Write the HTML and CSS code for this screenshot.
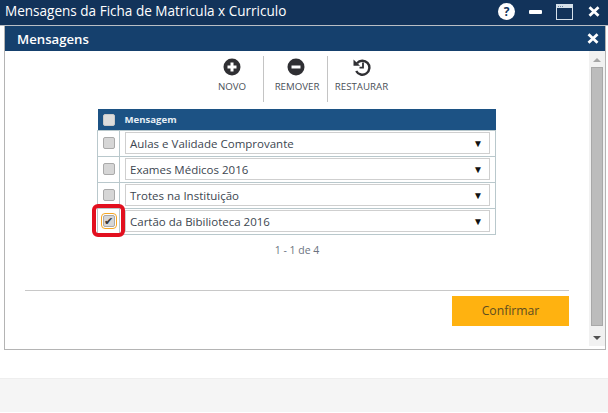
FILE: index.html
```html
<!DOCTYPE html>
<html lang="pt">

<head>
    <meta charset="UTF-8">
    <title>Mensagens da Ficha de Matricula x Curriculo</title>
    <link rel="stylesheet" href="styles.css">
</head>

<body>

    <div class="topbar">
        <span class="topbar-title">Mensagens da Ficha de Matricula x Curriculo</span>
        <div class="topbar-icons">
            <span class="help-icon">?</span>
            <span class="min-icon"></span>
            <svg class="win-icon" width="17" height="16" viewBox="0 0 17 16">
                <rect x="0.5" y="0.5" width="16" height="15" fill="#12335a" stroke="#d5e0ea"/>
                <rect x="1" y="1" width="15" height="3" fill="#d5e0ea"/>
                <path d="M2 2.5h1M4 2.5h1M6 2.5h1" stroke="#6d86a0"/>
            </svg>
            <svg class="close-icon" width="12" height="11" viewBox="0 0 12 11">
                <path d="M1.5 1.2l9 8.6M10.5 1.2l-9 8.6" stroke="#fff" stroke-width="2.8"/>
            </svg>
        </div>
    </div>

    <div class="dialog">
        <div class="dialog-head">
            <span>Mensagens</span>
            <svg width="12" height="11" viewBox="0 0 12 11">
                <path d="M1.5 1.2l9 8.6M10.5 1.2l-9 8.6" stroke="#fff" stroke-width="2.8"/>
            </svg>
        </div>

        <div class="dialog-body">
            <div class="content">
                <div class="toolbar">
                    <div class="tool tool-novo">
                        <svg width="18" height="18" viewBox="0 0 18 18">
                            <circle cx="9" cy="9" r="8.5" fill="#2f2f33"/>
                            <path d="M9 4.5v9M4.5 9h9" stroke="#fff" stroke-width="3"/>
                        </svg>
                        <span>NOVO</span>
                    </div>
                    <div class="tool tool-remover">
                        <svg width="18" height="18" viewBox="0 0 18 18">
                            <circle cx="9" cy="9" r="8.5" fill="#2f2f33"/>
                            <path d="M4.5 9h9" stroke="#fff" stroke-width="3"/>
                        </svg>
                        <span>REMOVER</span>
                    </div>
                    <div class="tool tool-restaurar">
                        <svg width="18" height="18" viewBox="0 0 18 18">
                            <path d="M4 5.2A7 7 0 1 1 3.2 13" fill="none" stroke="#2f2f33" stroke-width="2.4"/>
                            <path d="M0.5 1.5l6.5 6.2H0.5z" fill="#2f2f33"/>
                            <path d="M10 4.5v5.2H6.5" fill="none" stroke="#2f2f33" stroke-width="1.8"/>
                        </svg>
                        <span>RESTAURAR</span>
                    </div>
                </div>

                <div class="table-wrap">
                    <table class="grid">
                        <thead>
                            <tr>
                                <th class="col-check"><span class="check"></span></th>
                                <th>Mensagem</th>
                            </tr>
                        </thead>
                        <tbody>
                            <tr>
                                <td class="col-check"><span class="check"></span></td>
                                <td><div class="select"><span>Aulas e Validade Comprovante</span><i>▼</i></div></td>
                            </tr>
                            <tr>
                                <td class="col-check"><span class="check"></span></td>
                                <td><div class="select"><span>Exames Médicos 2016</span><i>▼</i></div></td>
                            </tr>
                            <tr>
                                <td class="col-check"><span class="check"></span></td>
                                <td><div class="select"><span>Trotes na Instituição</span><i>▼</i></div></td>
                            </tr>
                            <tr>
                                <td class="col-check">
                                    <span class="check checked">✔</span>
                                    <span class="highlight"></span>
                                </td>
                                <td><div class="select"><span>Cartão da Bibilioteca 2016</span><i>▼</i></div></td>
                            </tr>
                        </tbody>
                    </table>
                </div>

                <div class="pager">1 - 1 de 4</div>

                <div class="actions">
                    <button class="btn">Confirmar</button>
                </div>
            </div>

            <div class="scrollbar">
                <span class="arrow-up"></span>
                <span class="thumb"></span>
                <span class="arrow-down"></span>
            </div>
        </div>
    </div>

    <div class="footer"></div>

</body>

</html>
```

FILE: styles.css
```css
:root {
    --navy: #12335a;
    --blue: #15406d;
    --head: #1c5284;
    --line: #b9c8cc;
    --border: #b4b4b4;
}

* {
    box-sizing: border-box;
}

html,
body {
    height: 100%;
}

body {
    margin: 0;
    width: 608px;
    height: 413px;
    overflow: hidden;
    background-color: #fff;
    font-family: "Open Sans", "Noto Sans", sans-serif;
    color: #3c4650;
}

.topbar {
    height: 26px;
    background-color: var(--navy);
    border-bottom: 1px solid #b9bec4;
    display: flex;
    align-items: center;
    justify-content: space-between;
    color: #fff;
    padding: 0 8px 2px 5px;
}

.topbar-title {
    font-size: 13.55px;
    line-height: 20px;
    margin-top: -1px;
}

.topbar-icons {
    display: flex;
    align-items: center;
}

.help-icon {
    width: 17px;
    height: 17px;
    border-radius: 50%;
    background-color: #fff;
    color: #12335a;
    font-size: 12px;
    font-weight: 700;
    line-height: 17px;
    text-align: center;
}

.min-icon {
    width: 13px;
    height: 4px;
    border-radius: 1px;
    background-color: #fff;
    margin-left: 14px;
}

.win-icon {
    margin-left: 14px;
}

.close-icon {
    margin-left: 15px;
}

.dialog {
    width: 602px;
    height: 324px;
    margin-left: 4px;
    border: 1px solid var(--border);
    border-top: 0;
    display: flex;
    flex-direction: column;
}

.dialog-head {
    height: 25px;
    background-color: var(--blue);
    color: #fff;
    font-size: 13.2px;
    font-weight: 600;
    display: flex;
    align-items: center;
    justify-content: space-between;
    padding: 0 6px 0 12px;
    flex: none;
}

.dialog-body {
    flex: 1;
    display: flex;
    min-height: 0;
}

.content {
    width: 584px;
    flex: none;
}

.toolbar {
    display: flex;
    height: 46px;
    margin-top: 5px;
    padding-left: 200px;
}

.tool {
    display: flex;
    flex-direction: column;
    align-items: center;
    font-size: 9.7px;
    line-height: 14px;
    color: #4a5058;
    padding-top: 2px;
    gap: 4px;
}

.tool-novo {
    width: 58px;
    padding-right: 4px;
}

.tool-remover {
    width: 65px;
    padding-left: 3px;
    border-left: 1px solid #c4c4c4;
    border-right: 1px solid #c4c4c4;
}

.tool-remover svg {
    margin-right: 2px;
}

.tool-restaurar {
    width: 67px;
}

.table-wrap {
    margin: 7px 0 0 92px;
}

.grid {
    width: 399px;
    border-collapse: collapse;
    table-layout: fixed;
}

.grid th {
    height: 21px;
    padding: 1px 0 0 5px;
    background-color: var(--head);
    color: #e6eef5;
    font-size: 9.6px;
    font-weight: 700;
    text-align: left;
}

.grid td {
    height: 26px;
    padding: 0 5px 0 5px;
    border: 1px solid var(--line);
}

.grid .col-check {
    width: 22px;
    padding: 0;
    text-align: center;
    position: relative;
}

.check {
    display: block;
    width: 12px;
    height: 12px;
    margin: 0 auto;
    background-color: #d6d6d6;
    border: 1px solid #aaa;
    border-radius: 2px;
    font-size: 11px;
    font-weight: 400;
    line-height: 10px;
    color: #3a3a3a;
}

.grid th .check {
    margin-top: 2px;
    background-color: #dcdcdc;
    border-color: #c8c8c8;
}

.check.checked {
    outline: 1px solid #f5a623;
    outline-offset: 1px;
}

.highlight {
    position: absolute;
    left: -6px;
    top: -5px;
    width: 33px;
    height: 33px;
    border: 4px solid #e2101f;
    border-radius: 6px;
}

.select {
    height: 22px;
    border: 1px solid #cfcfcf;
    display: flex;
    align-items: center;
    justify-content: space-between;
    padding: 0 6px 0 4px;
    font-size: 11.5px;
    color: #3c4650;
}

.select i {
    font-style: normal;
    font-size: 10px;
    color: #111;
}

.pager {
    margin: 8px 0 0 93px;
    width: 398px;
    text-align: center;
    font-size: 10.5px;
    line-height: 14px;
    color: #6c7380;
}

.actions {
    width: 544px;
    margin: 33px 0 0 20px;
    border-top: 1px solid #c8c8c8;
    padding-top: 5px;
    display: flex;
    justify-content: flex-end;
}

.btn {
    width: 117px;
    height: 30px;
    background-color: #ffb210;
    border: none;
    padding: 0;
    font-family: inherit;
    font-size: 12.2px;
    color: #5e4d20;
}

.scrollbar {
    width: 16px;
    height: 295px;
    background-color: #f1f1f1;
    display: flex;
    flex-direction: column;
    align-items: center;
    padding-top: 7px;
}

.arrow-up {
    width: 0;
    height: 0;
    border: 4px solid transparent;
    border-top: 0;
    border-bottom: 4px solid #a6a6a6;
}

.thumb {
    width: 12px;
    height: 259px;
    margin-top: 5px;
    background-color: #bcbcbc;
    border: 1px solid #a8a8a8;
}

.arrow-down {
    width: 0;
    height: 0;
    margin-top: 10px;
    border: 4px solid transparent;
    border-bottom: 0;
    border-top: 4px solid #505050;
}

.footer {
    height: 34px;
    margin-top: 28px;
    background-color: #f5f5f5;
    border-top: 1px solid #eee;
}
```
